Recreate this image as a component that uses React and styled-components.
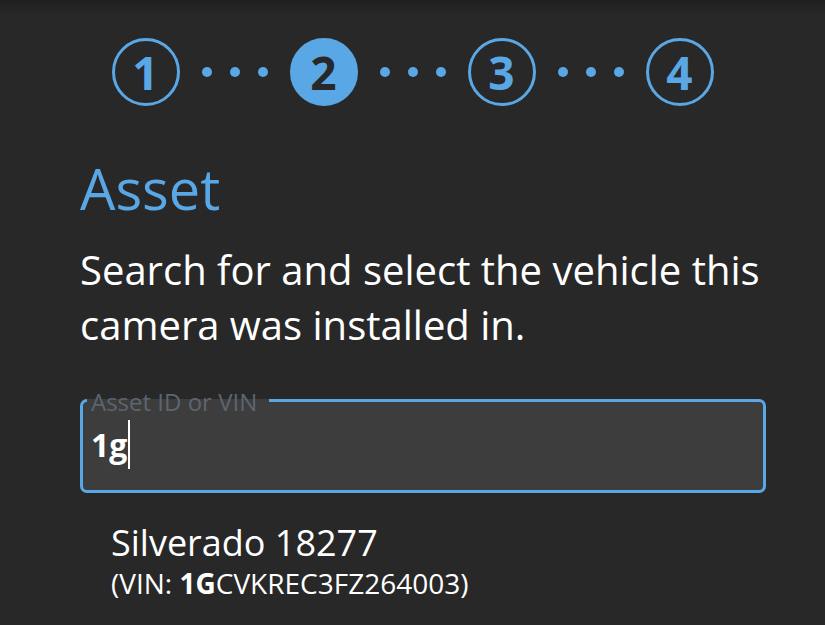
import React from 'react'
import styled, { createGlobalStyle } from 'styled-components'

const blue = '#5aa7e5';
const steps = [1, 2, 3, 4];
const current = 2;

const GlobalStyle = createGlobalStyle`
  html, body {
    margin: 0;
    padding: 0;
  }
  body {
    background: linear-gradient(#1f1f1f 0, #282828 14px) #282828;
    background-repeat: no-repeat;
    background-color: #282828;
    font-family: "Open Sans", "Noto Sans", sans-serif;
    color: #fff;
    min-height: 625px;
  }
`;

const App = () => {
  return (
    <>
      <GlobalStyle />
      <Page>
        <Stepper>
          {steps.map((n, i) => (
            <React.Fragment key={n}>
              {i > 0 && (
                <Dots>
                  <Dot />
                  <Dot />
                  <Dot />
                </Dots>
              )}
              <StepCircle active={n === current}>{n}</StepCircle>
            </React.Fragment>
          ))}
        </Stepper>
        <Content>
          <Title>Asset</Title>
          <Description>
            Search for and select the vehicle this camera was installed in.
          </Description>
          <Field>
            <Legend>Asset ID or VIN</Legend>
            <Value>
              1g
              <Caret />
            </Value>
          </Field>
          <Result>
            <ResultName>Silverado 18277</ResultName>
            <ResultVin>
              (VIN: <b>1G</b>CVKREC3FZ264003)
            </ResultVin>
          </Result>
        </Content>
      </Page>
    </>
  )
}

const Page = styled.main`
  width: 825px;
  height: 625px;
  overflow: hidden;
`;

const Stepper = styled.div`
  display: flex;
  justify-content: center;
  align-items: center;
  padding: 38px 0 0;
`;

const StepCircle = styled.div`
  box-sizing: border-box;
  width: 68px;
  height: 68px;
  border-radius: 50%;
  border: 3px solid ${blue};
  background: ${({ active }) => (active ? blue : 'transparent')};
  color: ${({ active }) => (active ? '#282828' : blue)};
  display: flex;
  align-items: center;
  justify-content: center;
  font-size: 46px;
  font-weight: 700;
  line-height: 1;
`;

const Dots = styled.div`
  display: flex;
  align-items: center;
  gap: 18px;
  margin: 0 22px;
`;

const Dot = styled.span`
  width: 10px;
  height: 10px;
  border-radius: 50%;
  background: ${blue};
`;

const Content = styled.section`
  padding: 0 59px 0 80px;
  margin-top: 44px;
`;

const Title = styled.h1`
  margin: 0;
  font-size: 56px;
  font-weight: 400;
  line-height: 76px;
  color: ${blue};
`;

const Description = styled.p`
  margin: 16px 0 0;
  font-size: 40px;
  line-height: 55px;
  color: #fff;
`;

const Field = styled.fieldset`
  margin: 32px 0 0;
  padding: 0 4px 21px 4px;
  border: 3px solid ${blue};
  border-radius: 7px;
  background: #3d3d3d;
  min-width: 0;
`;

const Legend = styled.legend`
  padding: 4px 12px 0 4px;
  font-size: 24px;
  line-height: 28px;
  color: #5b6570;
`;

const Value = styled.div`
  display: flex;
  align-items: center;
  height: 49px;
  margin-top: 4px;
  padding-left: 4px;
  font-size: 32px;
  font-weight: 700;
  line-height: 49px;
  color: #fff;
`;

const Caret = styled.span`
  width: 2px;
  height: 49px;
  margin-left: 1px;
  background: #fff;
`;

const Result = styled.div`
  padding: 30px 0 0 31px;
`;

const ResultName = styled.div`
  font-size: 36px;
  line-height: 40px;
  color: #fff;
`;

const ResultVin = styled.div`
  margin-top: 2px;
  font-size: 28px;
  line-height: 36px;
  color: #fff;

  b {
    font-weight: 700;
  }
`;

export default App
